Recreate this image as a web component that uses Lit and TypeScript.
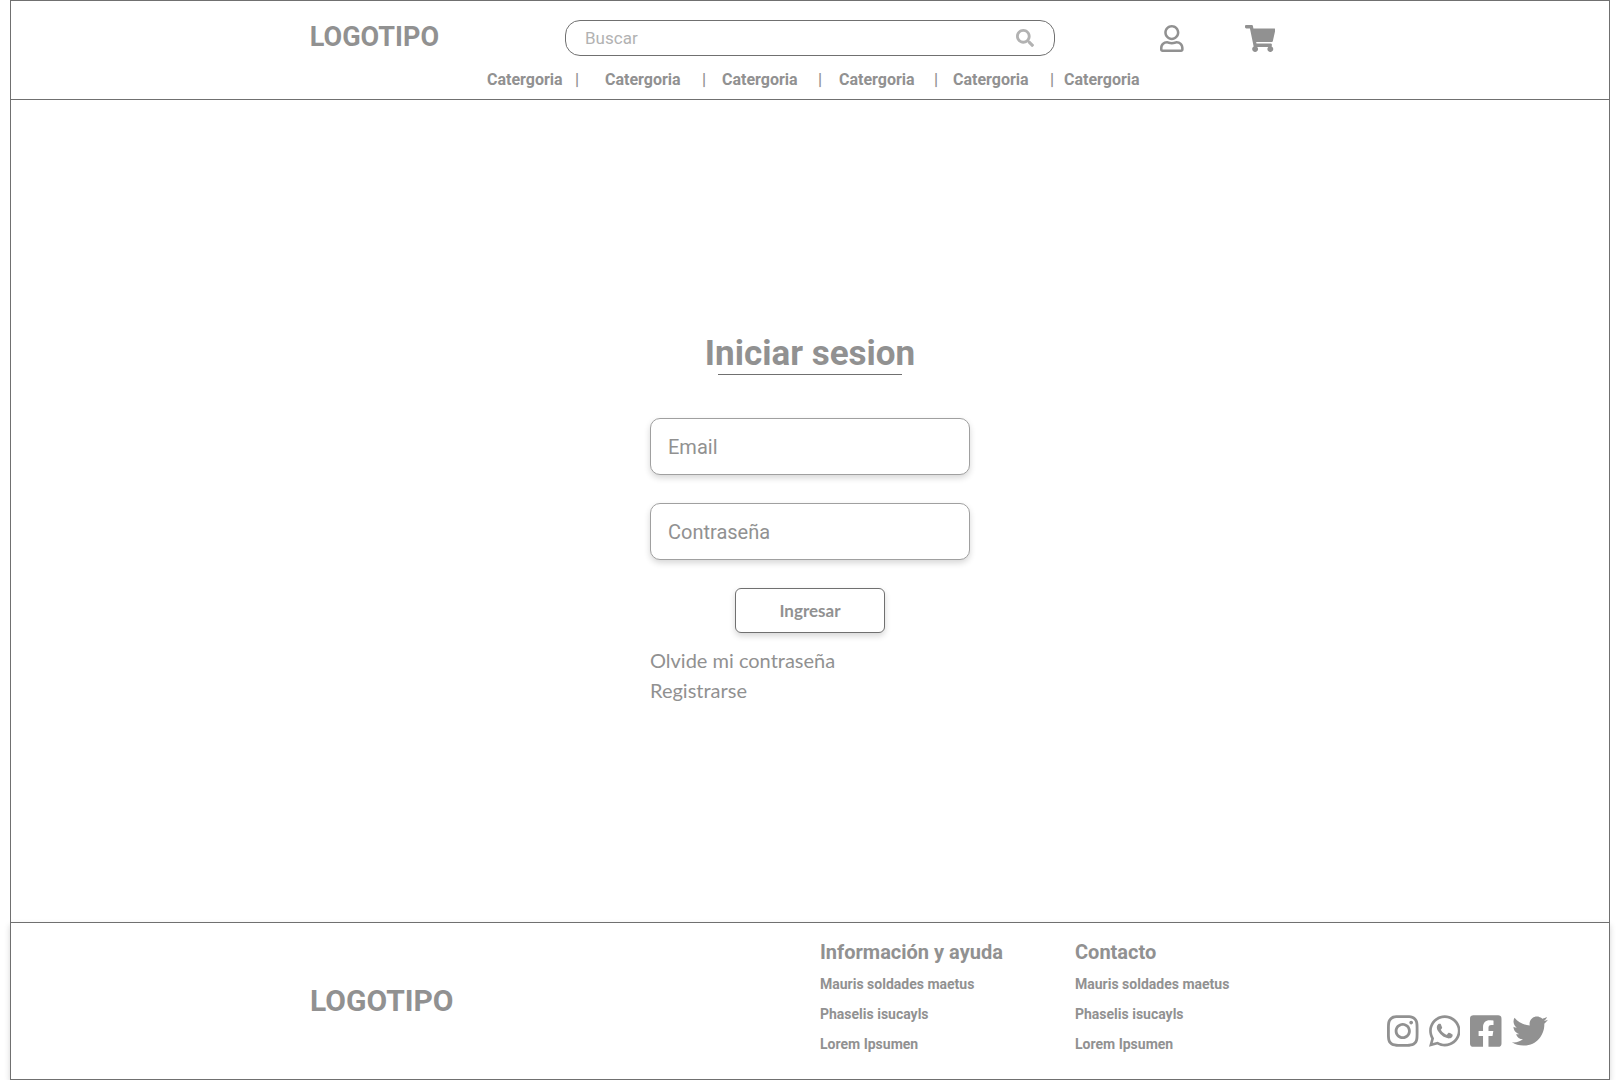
import { LitElement, html, css, svg } from "lit";
import { customElement } from "lit/decorators.js";

interface Icon {
  box: string;
  path: string;
}

const icons: Record<string, Icon> = {
  search: {
    box: "0 0 512 512",
    path: "M505 442.7L405.3 343c-4.5-4.5-10.6-7-17-7H372c27.6-35.3 44-79.7 44-128C416 93.1 322.9 0 208 0S0 93.1 0 208s93.1 208 208 208c48.3 0 92.7-16.4 128-44v16.3c0 6.4 2.5 12.5 7 17l99.7 99.7c9.4 9.4 24.6 9.4 33.9 0l28.3-28.3c9.4-9.4 9.4-24.6.1-34zM208 336c-70.7 0-128-57.2-128-128 0-70.7 57.2-128 128-128 70.7 0 128 57.2 128 128 0 70.7-57.2 128-128 128z",
  },
  user: {
    box: "0 0 448 512",
    path: "M313.6 304c-28.7 0-42.5 16-89.6 16-47.1 0-60.8-16-89.6-16C60.2 304 0 364.2 0 438.4V464c0 26.5 21.5 48 48 48h352c26.5 0 48-21.5 48-48v-25.6c0-74.2-60.2-134.4-134.4-134.4zM400 464H48v-25.6c0-47.6 38.8-86.4 86.4-86.4 14.6 0 38.3 16 89.6 16 51.7 0 74.9-16 89.6-16 47.6 0 86.4 38.8 86.4 86.4V464zM224 288c79.5 0 144-64.5 144-144S303.5 0 224 0 80 64.5 80 144s64.5 144 144 144zm0-240c52.9 0 96 43.1 96 96s-43.1 96-96 96-96-43.1-96-96 43.1-96 96-96z",
  },
  cart: {
    box: "0 0 576 512",
    path: "M528.12 301.319l47.273-208C578.806 78.301 567.391 64 551.99 64H159.208l-9.166-44.81C147.758 8.021 137.93 0 126.529 0H24C10.745 0 0 10.745 0 24v16c0 13.255 10.745 24 24 24h69.883l70.248 343.435C147.325 417.1 136 435.222 136 456c0 30.928 25.072 56 56 56s56-25.072 56-56c0-15.674-6.447-29.835-16.824-40h209.647C430.447 426.165 424 440.326 424 456c0 30.928 25.072 56 56 56s56-25.072 56-56c0-22.172-12.888-41.332-31.579-50.405l5.517-24.276c3.413-15.018-8.002-29.319-23.403-29.319H218.117l-6.545-32h293.145c11.206 0 20.92-7.754 23.403-18.681z",
  },
  instagram: {
    box: "0 0 448 512",
    path: "M224.1 141c-63.6 0-114.9 51.3-114.9 114.9s51.3 114.9 114.9 114.9S339 319.5 339 255.9 287.7 141 224.1 141zm0 189.6c-41.1 0-74.7-33.5-74.7-74.7s33.5-74.7 74.7-74.7 74.7 33.5 74.7 74.7-33.6 74.7-74.7 74.7zm146.4-194.3c0 14.9-12 26.8-26.8 26.8-14.9 0-26.8-12-26.8-26.8s12-26.8 26.8-26.8 26.8 12 26.8 26.8zm76.1 27.2c-1.7-35.9-9.9-67.7-36.2-93.9-26.2-26.2-58-34.4-93.9-36.2-37-2.1-147.9-2.1-184.9 0-35.8 1.7-67.6 9.9-93.9 36.1s-34.4 58-36.2 93.9c-2.1 37-2.1 147.9 0 184.9 1.7 35.9 9.9 67.7 36.2 93.9s58 34.4 93.9 36.2c37 2.1 147.9 2.1 184.9 0 35.9-1.7 67.7-9.9 93.9-36.2 26.2-26.2 34.4-58 36.2-93.9 2.1-37 2.1-147.8 0-184.8zM398.8 388c-7.8 19.6-22.9 34.7-42.6 42.6-29.5 11.7-99.5 9-132.1 9s-102.7 2.6-132.1-9c-19.6-7.8-34.7-22.9-42.6-42.6-11.7-29.5-9-99.5-9-132.1s-2.6-102.7 9-132.1c7.8-19.6 22.9-34.7 42.6-42.6 29.5-11.7 99.5-9 132.1-9s102.7-2.6 132.1 9c19.6 7.8 34.7 22.9 42.6 42.6 11.7 29.5 9 99.5 9 132.1s2.7 102.7-9 132.1z",
  },
  whatsapp: {
    box: "0 0 448 512",
    path: "M380.9 97.1C339 55.1 283.2 32 223.9 32c-122.4 0-222 99.6-222 222 0 39.1 10.2 77.3 29.6 111L0 480l117.7-30.9c32.4 17.7 68.9 27 106.1 27h.1c122.3 0 224.1-99.6 224.1-222 0-59.3-25.2-115-67.1-157zm-157 341.6c-33.2 0-65.7-8.9-94-25.7l-6.7-4-69.8 18.3L72 359.2l-4.4-7c-18.5-29.4-28.2-63.3-28.2-98.2 0-101.7 82.8-184.5 184.6-184.5 49.3 0 95.6 19.2 130.4 54.1 34.8 34.9 56.2 81.2 56.1 130.5 0 101.8-84.9 184.6-186.6 184.6zm101.2-138.2c-5.5-2.8-32.8-16.2-37.9-18-5.1-1.9-8.8-2.8-12.5 2.8-3.7 5.6-14.3 18-17.6 21.8-3.2 3.7-6.5 4.2-12 1.4-32.6-16.3-54-29.1-75.5-66-5.7-9.8 5.7-9.1 16.3-30.3 1.8-3.7.9-6.9-.5-9.7-1.4-2.8-12.5-30.1-17.1-41.2-4.5-10.8-9.1-9.3-12.5-9.5-3.2-.2-6.9-.2-10.6-.2-3.7 0-9.7 1.4-14.8 6.9-5.1 5.6-19.4 19-19.4 46.3 0 27.3 19.9 53.7 22.6 57.4 2.8 3.7 39.1 59.7 94.8 83.8 35.2 15.2 49 16.5 66.6 13.9 10.7-1.6 32.8-13.4 37.4-26.4 4.6-13 4.6-24.1 3.2-26.4-1.3-2.5-5-3.9-10.5-6.6z",
  },
  facebook: {
    box: "0 0 448 512",
    path: "M400 32H48A48 48 0 0 0 0 80v352a48 48 0 0 0 48 48h137.25V327.69h-63V256h63v-54.64c0-62.15 37-96.48 93.67-96.48 27.14 0 55.52 4.84 55.52 4.84v61h-31.27c-30.81 0-40.42 19.12-40.42 38.73V256h68.78l-11 71.69h-57.78V480H400a48 48 0 0 0 48-48V80a48 48 0 0 0-48-48z",
  },
  twitter: {
    box: "0 0 512 512",
    path: "M459.37 151.716c.325 4.548.325 9.097.325 13.645 0 138.72-105.583 298.558-298.558 298.558-59.452 0-114.68-17.219-161.137-47.106 8.447.974 16.568 1.299 25.34 1.299 49.055 0 94.213-16.568 130.274-44.832-46.132-.975-84.792-31.188-98.112-72.772 6.498.974 12.995 1.624 19.818 1.624 9.421 0 18.843-1.3 27.614-3.573-48.081-9.747-84.143-51.98-84.143-102.985v-1.299c13.969 7.797 30.214 12.67 47.431 13.319-28.264-18.843-46.781-51.005-46.781-87.391 0-19.492 5.197-37.36 14.294-52.954 51.655 63.675 129.3 105.258 216.365 109.807-1.624-7.797-2.599-15.918-2.599-24.04 0-57.828 46.782-104.934 104.934-104.934 30.213 0 57.502 12.67 76.67 33.137 23.715-4.548 46.456-13.32 66.599-25.34-7.798 24.366-24.366 44.833-46.132 57.827 21.117-2.273 41.584-8.122 60.426-16.243-14.292 20.791-32.161 39.308-52.628 54.253z",
  },
};

const drawIcon = (name: string) => html`<svg class="icon" viewBox=${icons[name].box} aria-hidden="true">
  ${svg`<path fill="currentColor" d=${icons[name].path}></path>`}
</svg>`;

const categories = Array.from({ length: 6 }, () => "Catergoria");
const footerLinks = ["Mauris soldades maetus", "Phaselis isucayls", "Lorem Ipsumen"];
const footerColumns = [
  { title: "Información y ayuda", links: footerLinks },
  { title: "Contacto", links: footerLinks },
];
const networks = [
  { icon: "instagram", label: "Instagram" },
  { icon: "whatsapp", label: "WhatsApp" },
  { icon: "facebook", label: "Facebook" },
  { icon: "twitter", label: "Twitter" },
];

@customElement("app-root")
export class AppRoot extends LitElement {
  static styles = css`
    :host {
      --ink: #919191;
      --line: #707070;
      display: block;
      font-family: Roboto, sans-serif;
      color: var(--ink);
      background: #fff;
    }
    * {
      box-sizing: border-box;
    }
    a {
      color: inherit;
      text-decoration: none;
    }
    button,
    input {
      font-family: inherit;
      color: inherit;
      background: #fff;
    }
    .icon {
      display: block;
      height: 100%;
    }
    .page {
      display: flex;
      flex-direction: column;
      min-height: 100vh;
      padding: 0 10px;
    }

    .header {
      border: 1px solid var(--line);
      padding-top: 19px;
    }
    .bar {
      display: grid;
      grid-template-columns: 1fr minmax(200px, 490px) 1fr;
      align-items: center;
    }
    .brand {
      justify-self: end;
      margin-right: 126px;
      padding-bottom: 2px;
      font-size: 27px;
      line-height: 32px;
      font-weight: 700;
    }
    .search {
      display: flex;
      align-items: center;
      height: 36px;
      padding: 0 20px 0 19px;
      border: 1px solid var(--line);
      border-radius: 15px;
    }
    .search-input {
      flex: 1;
      min-width: 0;
      padding: 0;
      border: 0;
      outline: 0;
      font-size: 17px;
      line-height: 20px;
    }
    .search-input::placeholder {
      color: #b2b2b2;
      opacity: 1;
    }
    .search-button {
      height: 18px;
      padding: 0;
      border: 0;
      color: #b2b2b2;
    }
    .actions {
      display: flex;
      gap: 61px;
      padding: 1px 0 0 105px;
    }
    .action {
      height: 27px;
    }
    .categories {
      display: grid;
      grid-template-columns: 88px 30px 97px 20px 96px 21px 95px 19px 97px 14px 75px;
      justify-content: center;
      padding: 13px 0 9px 6px;
      font-size: 16px;
      line-height: 21px;
      font-weight: 700;
    }

    .main {
      flex: 1;
      display: flex;
      flex-direction: column;
      align-items: center;
      justify-content: center;
      padding-top: 16px;
      border: solid var(--line);
      border-width: 0 1px;
    }
    .login {
      display: flex;
      flex-direction: column;
      align-items: center;
      width: 320px;
    }
    .title {
      margin: 0;
      font-size: 35px;
      line-height: 41px;
      font-weight: 700;
    }
    .rule {
      width: 184px;
      margin: 0 0 43px;
      border: 0;
      border-top: 1px solid var(--line);
    }
    .field {
      width: 100%;
      height: 57px;
      margin-bottom: 28px;
      padding: 0 17px;
      border: 1px solid #a0a0a0;
      border-radius: 10px;
      box-shadow: 0 3px 6px rgba(0, 0, 0, 0.16);
      font-size: 20px;
      line-height: 24px;
    }
    .field::placeholder {
      color: var(--ink);
      opacity: 1;
    }
    .submit {
      width: 150px;
      height: 45px;
      padding: 0;
      border: 1px solid var(--line);
      border-radius: 6px;
      box-shadow: 0 3px 6px rgba(0, 0, 0, 0.16);
      font-family: Lato, sans-serif;
      font-size: 17px;
      font-weight: 700;
    }
    .help {
      align-self: flex-start;
      display: flex;
      flex-direction: column;
      margin-top: 12px;
      font-family: Lato, sans-serif;
      font-size: 20px;
      line-height: 30px;
    }

    .footer {
      display: grid;
      grid-template-columns: 1fr 255px 312px 222px;
      padding-left: 299px;
      border: 1px solid var(--line);
      background: #fff;
      box-shadow: 0 3px 6px rgba(0, 0, 0, 0.16);
    }
    .footer-brand {
      align-self: center;
      font-size: 30px;
      line-height: 36px;
      font-weight: 700;
    }
    .column {
      padding: 12px 0 20px;
    }
    .column-title {
      margin: 0;
      font-size: 20px;
      line-height: 34px;
      font-weight: 700;
    }
    .column-links {
      margin: 0;
      padding: 0;
      list-style: none;
      font-size: 14px;
      line-height: 30px;
      font-weight: 700;
    }
    .networks {
      align-self: end;
      display: flex;
      gap: 10px;
      padding-bottom: 30px;
    }
    .network {
      height: 36px;
    }
  `;

  render() {
    return html`
      <div class="page">
        <header class="header">
          <div class="bar">
            <a class="brand" href="#">LOGOTIPO</a>
            <form class="search" role="search">
              <input class="search-input" type="text" placeholder="Buscar" aria-label="Buscar" />
              <button class="search-button" type="submit" aria-label="Buscar">${drawIcon("search")}</button>
            </form>
            <div class="actions">
              <a class="action" href="#" aria-label="Mi cuenta">${drawIcon("user")}</a>
              <a class="action" href="#" aria-label="Carrito">${drawIcon("cart")}</a>
            </div>
          </div>
          <nav class="categories">
            ${categories.map(
              (name, i) => html`${i ? html`<span>|</span>` : ""}<a href="#">${name}</a>`
            )}
          </nav>
        </header>

        <main class="main">
          <form class="login">
            <h1 class="title">Iniciar sesion</h1>
            <hr class="rule" />
            <input class="field" type="email" placeholder="Email" aria-label="Email" />
            <input class="field" type="password" placeholder="Contraseña" aria-label="Contraseña" />
            <button class="submit" type="submit">Ingresar</button>
            <div class="help">
              <a href="#">Olvide mi contraseña</a>
              <a href="#">Registrarse</a>
            </div>
          </form>
        </main>

        <footer class="footer">
          <a class="footer-brand" href="#">LOGOTIPO</a>
          ${footerColumns.map(
            (column) => html`<section class="column">
              <h2 class="column-title">${column.title}</h2>
              <ul class="column-links">
                ${column.links.map((link) => html`<li><a href="#">${link}</a></li>`)}
              </ul>
            </section>`
          )}
          <div class="networks">
            ${networks.map(
              (n) => html`<a class="network" href="#" aria-label=${n.label}>${drawIcon(n.icon)}</a>`
            )}
          </div>
        </footer>
      </div>
    `;
  }
}
